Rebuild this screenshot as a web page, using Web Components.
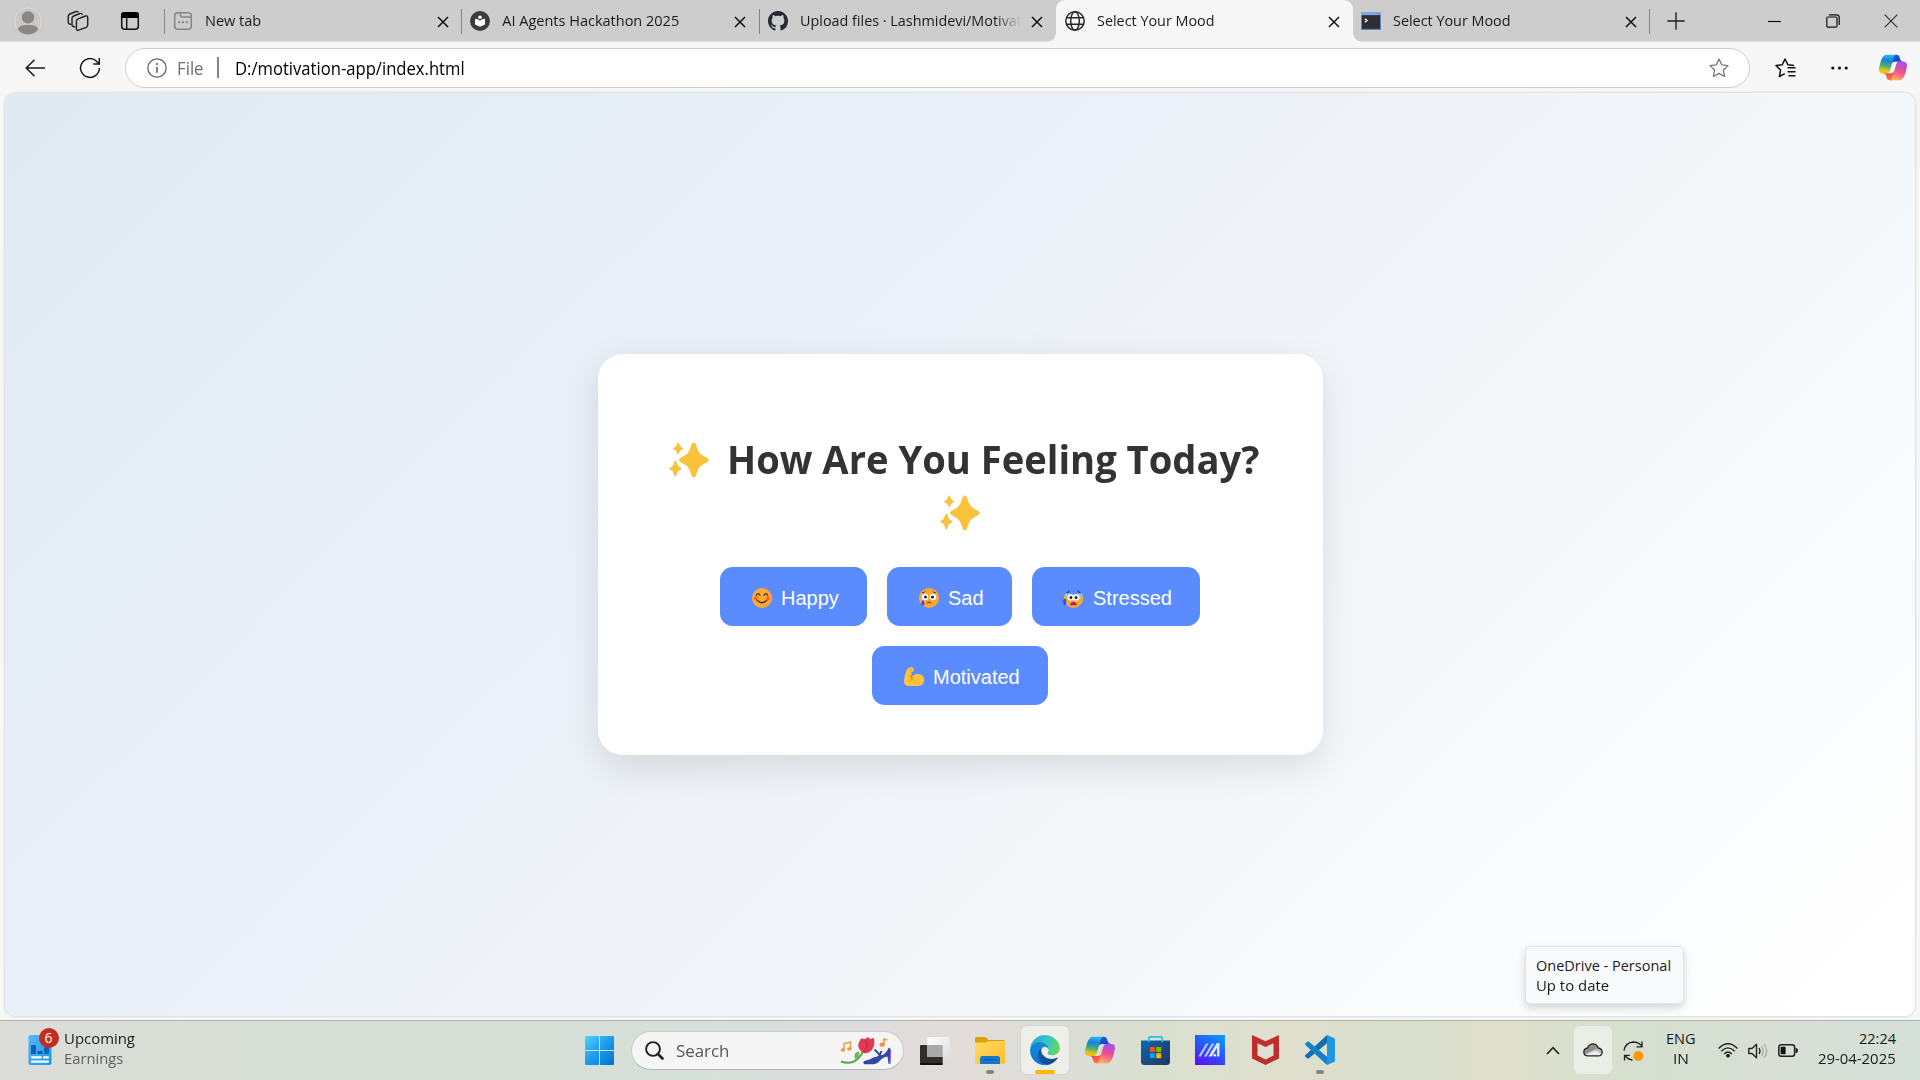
<!DOCTYPE html>
<html lang="en">
<head>
<meta charset="utf-8">
<title>Select Your Mood</title>
<style>
html,body{margin:0;height:100%;overflow:hidden;background:#f7f7f7;font-family:"Open Sans","Noto Sans",sans-serif;color:#1b1b1b}
</style>
</head>
<body>
<desktop-screen></desktop-screen>
<script>
const ICONS = {
avatar:['0 0 28 28','<circle cx="14" cy="14" r="13.2" fill="#cac8c5" stroke="#dedcd9" stroke-width="1"/><circle cx="14" cy="10.4" r="6.2" fill="#8a8886"/><path d="M3.7 22.5C5 18.500 9 17.900 14 17.900s9 .6 10.300 4.600A13.200 13.200 0 0 1 3.700 22.500z" fill="#8a8886"/>'],
spaces:['0 0 22 22','<g fill="#cdcdcd" stroke="#222" stroke-width="1.400" stroke-linejoin="round"><path d="M4.500 14.600 2.600 14Q1.200 13.500 1.200 12V6.500Q1.200 4.800 2.900 4L9 1.500Q10.500 1 11.500 2.400"/><path d="M8.200 17.200 6.300 16.500Q5 16 5 14.500V8.500Q5 6.800 6.700 6L13 3.500Q14.600 3 15.700 4.600"/><path d="M9.400 11.200Q9.400 9.500 11 8.800L18.500 6Q20.700 5.400 20.700 7.500V15Q20.700 16.600 19.200 17.300L11.600 20.200Q9.400 20.800 9.400 18.700z"/></g>'],
vtabs:['0 0 20 20','<rect x="1.700" y="1.700" width="16.600" height="16.600" rx="3" fill="none" stroke="#111" stroke-width="1.500"/><path d="M1 7V4Q1 1 4 1H16Q19 1 19 4V7z" fill="#000"/><path d="M6.700 6V18" stroke="#111" stroke-width="1.400"/>'],
newtab:['0 0 20 20','<g fill="none" stroke="#858585" stroke-width="1.500"><rect x="1.700" y="1.700" width="16.600" height="16.600" rx="3"/><path d="M7.500 2V4.500Q7.500 6 9 6H18"/></g><g fill="#858585"><rect x="5.200" y="10.200" width="2" height="2"/><rect x="9" y="10.200" width="2" height="2"/><rect x="12.800" y="10.200" width="2" height="2"/></g>'],
agents:['0 0 20 20','<circle cx="10" cy="10" r="10" fill="#3b3b3d"/><circle cx="10" cy="6.200" r="1.800" fill="#fff"/><path d="M5 7.800 8.500 8.600 10 9.800 11.500 8.600 15 7.800V13.500L10 15.800 5 13.500z" fill="#fff"/>'],
github:['0 0 16 16','<path fill="#24292f" d="M8 0C3.580 0 0 3.580 0 8c0 3.540 2.290 6.530 5.470 7.590.4.070.55-.17.55-.38 0-.19-.01-.82-.01-1.490-2.010.37-2.530-.49-2.690-.94-.09-.23-.48-.94-.82-1.130-.28-.15-.68-.52-.01-.53.63-.01 1.080.58 1.230.82.72 1.210 1.870.87 2.330.66.07-.52.28-.87.51-1.070-1.780-.2-3.640-.89-3.640-3.950 0-.87.31-1.590.82-2.150-.08-.2-.36-1.020.08-2.120 0 0 .67-.21 2.200.82.64-.18 1.320-.27 2-.27s1.360.09 2 .27c1.530-1.040 2.200-.82 2.200-.82.44 1.100.16 1.920.08 2.120.51.56.82 1.270.82 2.150 0 3.070-1.870 3.750-3.650 3.950.29.25.54.73.54 1.480 0 1.070-.01 1.930-.01 2.200 0 .21.15.46.55.38A8.010 8.010 0 0 0 16 8c0-4.420-3.580-8-8-8z"/>'],
globe:['0 0 20 20','<g fill="none" stroke="#262626" stroke-width="1.500"><circle cx="10" cy="10" r="9.200"/><ellipse cx="10" cy="10" rx="4.300" ry="9.200"/><path d="M1.700 6.700H18.300M1.700 13.300H18.300"/></g>'],
term:['0 0 20 18','<rect width="20" height="18" rx=".8" fill="#5b86c4"/><rect x="1" y="3.200" width="18" height="13.600" fill="#2f2f31"/><rect width="20" height="3" fill="#7aa9e6"/><rect x="16" y=".8" width="2.300" height="1.600" fill="#d66"/><path d="M3.800 6.800 6 8.500 3.800 10.200" fill="none" stroke="#fff" stroke-width="1.300"/>'],
x:['0 0 12 12','<path d="M1 1 11 11M11 1 1 11" stroke="#111" stroke-width="1.500" fill="none"/>'],
xthin:['0 0 14 14','<path d="M.7.700 13.300 13.300M13.300.700.7 13.300" stroke="#333" stroke-width="1.200"/>'],
plus:['0 0 18 18','<path d="M9 .3V17.700M.3 9H17.700" stroke="#222" stroke-width="1.400"/>'],
min:['0 0 13 13','<path d="M0 6.500H13" stroke="#111" stroke-width="1.200"/>'],
restore:['0 0 14 14','<g fill="none" stroke="#111" stroke-width="1.200"><rect x=".8" y="3" width="10.200" height="10.200" rx="1.200"/><path d="M3 .8H10.500Q13.200.8 13.200 3.500V11"/></g>'],
back:['0 0 20 18','<path d="M20 9H1.500M9.500.700 1.200 9l8.300 8.300" fill="none" stroke="#1a1a1a" stroke-width="1.500"/>'],
reload:['0 0 22 22','<path d="M20.400 11A9.400 9.400 0 1 1 17.300 4L20 6.700M20.300 1V7H14.300" fill="none" stroke="#1a1a1a" stroke-width="1.500"/>'],
info:['0 0 20 20','<circle cx="10" cy="10" r="9.200" fill="none" stroke="#666" stroke-width="1.300"/><path d="M10 9V14.700" stroke="#555" stroke-width="1.500"/><circle cx="10" cy="6" r="1" fill="#555"/>'],
star:['0 0 20 20','<path d="M10 1 12.700 6.800 19 7.600 14.400 12 15.600 18.500 10 15.400 4.400 18.500 5.600 12 1 7.600 7.300 6.800z" fill="none" stroke="#767676" stroke-width="1.300" stroke-linejoin="round"/>'],
favs:['0 0 21 20','<path d="M19 7.600 13 6.800 10 1 7.300 6.800 1 7.600 5.600 12 4.400 18.500 9.800 15.600" fill="none" stroke="#111" stroke-width="1.500" stroke-linejoin="round"/><path d="M12.500 9.700H20.500M12.500 13.700H20.500M13.500 17.700H20.500" stroke="#111" stroke-width="1.600"/>'],
dots:['0 0 17 4','<g fill="#111"><circle cx="1.800" cy="2" r="1.600"/><circle cx="8.500" cy="2" r="1.600"/><circle cx="15.200" cy="2" r="1.600"/></g>'],
copilot:['2 3 44 42','<defs><linearGradient id="a" x1="0" y1="0" x2="1" y2="1"><stop offset="0" stop-color="#2764e7"/><stop offset="1" stop-color="#0c2db8"/></linearGradient><linearGradient id="b" x1=".6" y1="1" x2=".3" y2="0"><stop offset="0" stop-color="#ff7a3d"/><stop offset="1" stop-color="#e8304f"/></linearGradient><linearGradient id="c" x1=".5" y1="0" x2=".35" y2="1"><stop offset="0" stop-color="#2bb8f7"/><stop offset=".3" stop-color="#1684dc"/><stop offset=".6" stop-color="#40ad7e"/><stop offset=".85" stop-color="#dfc516"/><stop offset="1" stop-color="#ffbd00"/></linearGradient><linearGradient id="d" x1=".7" y1="0" x2=".35" y2="1"><stop offset="0" stop-color="#a44ff0"/><stop offset=".5" stop-color="#ee4f91"/><stop offset="1" stop-color="#ffb266"/></linearGradient></defs><path fill="url(#a)" d="M34.142 7.325A4.630 4.630 0 0 0 29.700 4h-1.350a4.630 4.630 0 0 0-4.554 3.794L21.480 20.407l.575-1.965a4.630 4.630 0 0 1 4.444-3.330h7.853l3.294 1.282 3.175-1.283h-.926a4.630 4.630 0 0 1-4.443-3.325z"/><path fill="url(#b)" d="M14.330 40.656A4.630 4.630 0 0 0 18.779 44h2.870a4.630 4.630 0 0 0 4.629-4.510l.312-12.163-.654 2.233a4.630 4.630 0 0 1-4.443 3.329h-7.919l-2.823-1.531-3.057 1.531h.912a4.630 4.630 0 0 1 4.447 3.344z"/><path fill="url(#c)" d="M29.500 4H13.460c-4.583 0-7.332 6.057-9.165 12.113-2.172 7.177-5.014 16.775 3.208 16.775h6.926a4.630 4.630 0 0 0 4.453-3.358 2077 2077 0 0 1 4.971-17.156c.843-2.843 1.544-5.284 2.621-6.805C27.080 4.717 28.086 4 29.500 4"/><path fill="url(#d)" d="M18.498 44h16.040c4.582 0 7.332-6.058 9.165-12.115 2.171-7.177 5.013-16.775-3.208-16.775h-6.926a4.630 4.630 0 0 0-4.454 3.358 2084 2084 0 0 1-4.972 17.160c-.842 2.842-1.543 5.283-2.620 6.805-.604.852-1.610 1.567-3.025 1.567"/>'],
sparkles:['0 0 40 36','<g fill="#f8c23c"><path d="M24.800.5Q26.300.5 27 2.600C29.600 10.600 30.500 12 37.500 15.600Q39.800 16.800 39.800 18T37.500 20.400C30.500 24 29.600 25.400 27 33.400Q26.300 35.500 24.800 35.500T22.600 33.400C20 25.400 19.100 24 12.100 20.400Q10 19.200 10 18T12.100 15.600C19.100 12 20 10.600 22.600 2.600Q23.300.5 24.800.5z"/><path d="M9.200.500Q9.900.500 10.200 1.800C11 4.300 11.600 4.900 14 5.900Q14.800 6.400 14 6.900C11.600 7.900 11 8.500 10.200 11Q9.900 12.200 9.200 12.200T8.200 11C7.400 8.500 6.800 7.900 4.400 6.900Q3.600 6.400 4.400 5.900C6.800 4.900 7.400 4.300 8.200 1.800Q8.500.500 9.200.500z"/><path d="M6.300 18.500Q7.100 18.500 7.500 20C8.500 23.500 9.300 24.800 12.200 26Q13.300 26.600 12.200 27.200C9.300 28.400 8.500 29.500 7.500 33Q7.100 34.500 6.300 34.500T5.200 33C4.200 29.500 3.400 28.400.7 27.200Q-.3 26.600.7 26C3.400 24.800 4.200 23.500 5.200 20Q5.500 18.500 6.300 18.500z"/></g>'],
happy:['0 0 20 20','<circle cx="10" cy="10" r="10" fill="#fca92f"/><g fill="#fb5f3a"><circle cx="4" cy="10.300" r="2"/><circle cx="16" cy="10.300" r="2"/></g><g fill="none" stroke="#402a32" stroke-width="1.300" stroke-linecap="round"><path d="M4.300 7.300Q6.200 3.800 8 7.300M12 7.300Q13.800 3.800 15.700 7.300M5.300 12.400Q10 17 14.700 12.400"/></g>'],
sad:['0 0 20 20','<circle cx="10" cy="10" r="10" fill="#fca92f"/><g fill="#fff"><circle cx="6" cy="9" r="3.200"/><circle cx="14" cy="9" r="3.200"/></g><g fill="#35232c"><circle cx="6.500" cy="9" r="1.600"/><circle cx="13.500" cy="9" r="1.600"/></g><path d="M7.700 15.300Q10 12.700 12.300 15.300M3 5Q5.500 4.700 6.500 3M17 5Q14.500 4.700 13.500 3" fill="none" stroke="#5a3428" stroke-width="1"/><path d="M3.800 11.800Q5.700 14 5.500 16 5.200 17.600 3.800 17.600T2.200 16Q2.200 14 3.800 11.800z" fill="#3a4bef"/>'],
stressed:['0 0 22 20','<path d="M2 6.500H20Q21 8 21 10A10 10 0 0 1 1 10Q1 8 2 6.500z" fill="#fca92f"/><path d="M3 4.500Q7 6.500 11 6.500T19 4.500L20.500 8 17 10H5L1.500 8z" fill="#8cc3f7"/><g fill="#fff"><circle cx="8" cy="9.500" r="3.200"/><circle cx="14" cy="9.500" r="3.200"/></g><g fill="#2b1c27"><circle cx="8.300" cy="9.600" r="1.500"/><circle cx="13.700" cy="9.600" r="1.500"/></g><path d="M7.500 17.300Q8 14 11 14T14.500 17.300z" fill="#b51378"/><path d="M3.500 5Q6 4.500 6.500 2.500M18.500 5Q16 4.500 15.500 2.500" stroke="#24407e" stroke-width="1.100" fill="none"/><path d="M.3 12.500Q.3 10.800 1.800 10.800T3.400 12.500V15.500Q3.300 17 1.800 17T.3 15.500z" fill="#3a4bef"/>'],
muscle:['0 0 20 19','<path d="M3 2.500Q4.500-.2 7.500.2 10.300 1 9.900 3.200 9.700 5 7.400 5L7 10.500Q9.500 7 14 7 20 7.500 20 13.200 19.500 18.700 14 19H4Q0 18.700 0 14 .3 7.500 3 2.500z" fill="#fec53b"/><path d="M5.800 3.500Q7.200 1.900 7.900 3.200M5 14.700Q7.800 13.300 8.200 9.500Q8.500 12.500 11 14.500M8 11Q6.500 10.500 4.500 8" fill="none" stroke="#dd8c17" stroke-width=".9"/>'],
widget:['0 0 24 30','<defs><linearGradient id="a" x1="0" y1="0" x2="1" y2="1"><stop offset="0" stop-color="#58b8f8"/><stop offset="1" stop-color="#1797e8"/></linearGradient></defs><rect x=".5" width="23" height="30" rx="2.200" fill="url(#a)"/><g fill="#0e5fb6"><rect x="3" y="10" width="5" height="9" rx="1"/><rect x="9.500" y="16" width="5" height="3" rx=".8"/><rect x="16" y="12" width="5" height="7" rx="1"/></g><g fill="#fff"><rect x="3" y="21.200" width="10.800" height="2.300" rx="1"/><rect x="15" y="21.200" width="6" height="2.300" rx="1"/><rect x="3" y="25.400" width="18" height="2.300" rx="1"/></g>'],
start:['0 0 29 29','<defs><linearGradient id="a" gradientUnits="userSpaceOnUse" x1="0" y1="0" x2="29" y2="29"><stop offset="0" stop-color="#52d1ff"/><stop offset=".5" stop-color="#1d9bea"/><stop offset="1" stop-color="#0072d2"/></linearGradient></defs><path fill="url(#a)" d="M1 0H14V14H0V1Q0 0 1 0zM15 0H28Q29 0 29 1V14H15zM0 15H14V29H1Q0 29 0 28zM15 15H29V28Q29 29 28 29H15z"/>'],
search:['0 0 19 19','<circle cx="8" cy="8" r="6.900" fill="none" stroke="#1c1c1c" stroke-width="1.900"/><path d="M12.800 12.800 17.500 17.500" stroke="#1c1c1c" stroke-width="2.600" stroke-linecap="round"/>'],
art:['0 0 52 28','<g fill="none" stroke="#f19a42" stroke-width="1.500"><path d="M4 12.500V6.500L10.500 5V11.500"/><path d="M44 7V1.300Q45 3.300 47.300 2.500"/></g><g fill="#f59139"><ellipse cx="2.900" cy="13" rx="2.200" ry="1.800"/><ellipse cx="9.300" cy="12" rx="2.200" ry="1.800"/><ellipse cx="42.200" cy="7.600" rx="2.700" ry="2.200"/></g><path d="M1 24.500Q11 28 17.500 22 21 18.500 23 14.500" fill="none" stroke="#54a644" stroke-width="2"/><path d="M15 22Q13 15.500 19 14.300 20 20 15 22z" fill="#65b94b"/><path d="M21 1.500 25 2 28 0 30 2 34 1Q35.500 9 31.500 13.500 27.500 17.500 22.500 15.500 16.500 11 19 5z" fill="#e33a50"/><path d="M25.500 3Q29 9 24 15.500" fill="none" stroke="#b5203c" stroke-width="1"/><path d="M42 18.500Q46.500 16 48.500 11 50.500 10.300 50.800 13.500L50.500 26.800H48.500L47.500 19.500Q43 20 40 23.500 37 27.300 33 27.300H24.500Q22.300 26 24.300 24 30 22.500 33.500 20.500z" fill="#3347a8"/><path d="M34.500 12.500 42.500 20.500M34 21Q38 23.500 41.500 14" fill="none" stroke="#3347a8" stroke-width="2"/><path d="M50.800 13 49.600 26.500" stroke="#a55bd7" stroke-width="1"/>'],
taskview:['0 0 30 28','<defs><linearGradient id="a" x1="0" y1="0" x2="1" y2="1"><stop offset="0" stop-color="#fff"/><stop offset="1" stop-color="#dedfe1"/></linearGradient></defs><rect x="0" y="8" width="22.700" height="20" rx="1" fill="#2e2e2e"/><rect x="0" y="26" width="22.700" height="2" rx="1" fill="#111"/><rect x="7.300" y="0" width="22.300" height="20" rx="1" fill="url(#a)"/><rect x="7.300" y="8" width="15.400" height="12" fill="#a9a9a9"/>'],
folder:['0 0 30 27','<defs><linearGradient id="a" x1="0" y1="0" x2="1" y2="1"><stop offset="0" stop-color="#ffdc62"/><stop offset="1" stop-color="#fdbd2c"/></linearGradient></defs><path d="M0 1.500Q0 0 1.500 0H9.500Q10.500 0 11.200.7L13.500 3H28.500Q30 3 30 4.500V10H0z" fill="#dda006"/><path d="M0 5.500H10.500L13 4H30V26.800H0z" fill="url(#a)"/><path d="M5 27V21.500Q5 19 7.500 19H22.500Q25 19 25 21.500V27z" fill="#1377cc"/><path d="M8.500 22.700H21.500" stroke="#0a579f" stroke-width="1"/>'],
edge:['4 0 258 259','<defs><linearGradient id="a" x1="0" y1=".5" x2="1" y2=".7"><stop offset="0" stop-color="#0c59a4"/><stop offset="1" stop-color="#114a8b"/></linearGradient><linearGradient id="b" x1=".7" y1="0" x2=".3" y2="1"><stop offset="0" stop-color="#1b8cd3"/><stop offset="1" stop-color="#0877d9"/></linearGradient><linearGradient id="c" x1="0" y1=".4" x2="1" y2=".6"><stop offset="0" stop-color="#24a9dc"/><stop offset=".5" stop-color="#34c5cc"/><stop offset="1" stop-color="#68d957"/></linearGradient></defs><path fill="url(#a)" d="M235.680 195.460a93.730 93.730 0 0 1-10.540 4.710 101.870 101.870 0 0 1-35.900 6.460c-47.320 0-88.540-32.550-88.540-74.320A31.480 31.480 0 0 1 117.130 105c-42.800 1.800-53.800 46.400-53.800 72.530 0 73.880 68.090 81.370 82.760 81.370 7.910 0 19.840-2.300 27-4.560l1.310-.44a128.340 128.340 0 0 0 66.600-52.800 4 4 0 0 0-5.320-5.640z"/><path fill="url(#b)" d="M110.340 246.340A79.200 79.200 0 0 1 87.600 225a80.720 80.720 0 0 1 29.530-120c3.120-1.470 8.450-4.130 15.540-4a32.350 32.350 0 0 1 25.690 13 31.880 31.880 0 0 1 6.360 18.660c0-.21 24.460-79.600-80-79.600-43.900 0-80 41.660-80 78.210a130.150 130.150 0 0 0 12.110 56 128 128 0 0 0 156.380 67.110 75.550 75.550 0 0 1-62.780-8z"/><path fill="url(#c)" d="M156.940 153.780c-.81 1.050-3.300 2.500-3.300 5.660 0 2.610 1.700 5.120 4.720 7.230 14.380 10 41.490 8.680 41.560 8.680a59.560 59.560 0 0 0 30.270-8.350 61.380 61.380 0 0 0 30.430-52.880c.26-22.410-8-37.310-11.340-43.910C228.090 28.760 182.350 0 132.610 0a128 128 0 0 0-128 126.200c.48-36.540 36.800-66.050 80-66.050 3.500 0 23.460.34 42 10.070 16.340 8.580 24.900 18.940 30.850 29.210 6.180 10.670 7.280 24.150 7.280 29.520s-2.740 13.330-7.800 24.830z"/>'],
store:['0 0 29 29','<defs><linearGradient id="a" x1="0" y1="0" x2="1" y2="1"><stop offset="0" stop-color="#0a67b2"/><stop offset="1" stop-color="#27345c"/></linearGradient></defs><path d="M0 4.500H29V25.500Q29 29 25.500 29H3.500Q0 29 0 25.500z" fill="url(#a)"/><path d="M7.700 6V2.500Q7.700.9 9.300.9H19.700Q21.300.9 21.300 2.500V6" fill="none" stroke="#29bdf0" stroke-width="1.800"/><path d="M9 11H14V16H9z" fill="#f25022"/><path d="M15.200 11H20.200V16H15.200z" fill="#7fba00"/><path d="M9 17.200H14V22.200H9z" fill="#00a4ef"/><path d="M15.200 17.200H20.200V22.200H15.200z" fill="#ffb900"/>'],
asus:['0 0 30 30','<defs><linearGradient id="a" x1=".8" y1="0" x2=".2" y2="1"><stop offset="0" stop-color="#0c96fd"/><stop offset=".5" stop-color="#2a53fa"/><stop offset="1" stop-color="#5a12f6"/></linearGradient></defs><rect width="30" height="30" fill="url(#a)"/><path d="M3.300 21.500 11 8.500H13.500L5.800 21.500zM9 21.500 16.800 8.500H19.300L11.500 21.500z" fill="#b5c8ff"/><path d="M13.500 21.500 21.800 8H24.500V21.500H22V12.800L16.800 21.500z" fill="#dfe7ff"/><circle cx="19.800" cy="20.300" r="1.300" fill="#fff"/>'],
mcafee:['0 0 27 30','<path d="M0 0 13.500 6.200 27 0V23.500L13.500 30 0 23.500z" fill="#bf2d2c"/><path d="M5.500 8.200 13.500 12 21.500 8.200V20.500L13.500 24.500 5.500 20.500z" fill="#dfe0d1"/>'],
vscode:['0 0 30 30','<path d="M22 0 29 2.900Q30 3.400 30 4.600V25.400Q30 26.600 29 27.100L22 30z" fill="#2196e3"/><path d="M22 0V8.300L4 23.200Q3 23.900 2.200 23.200L.4 21.600Q-.3 20.800.4 20z" fill="#0e6fb5"/><path d="M22 30V21.700L4 6.800Q3 6.100 2.200 6.800L.4 8.400Q-.3 9.200.4 10z" fill="#1180cb"/>'],
up:['0 0 14 9','<path d="M1 8 7 1.700 13 8" fill="none" stroke="#222" stroke-width="1.700"/>'],
cloud:['0 0 20 14','<path d="M5 12.900Q1 12.900.8 9 1 5.400 4.600 5 6 .8 10.200.8 14 1 15.200 5 19 5.500 19.200 9.200 18.800 12.900 15.500 12.900z" fill="#8f8f8f"/><path d="M5 12.900Q2.500 12.800 1.700 11L13 6 15.200 5Q19 5.500 19.200 9.200 18.800 12.900 15.500 12.900z" fill="#bdbdbd"/><path d="M5 12.900Q3.500 12.900 2.500 12L12.500 7.500 18.700 11Q17.500 12.900 15.500 12.900z" fill="#ececec"/><path d="M5 12.900Q1 12.900.8 9 1 5.400 4.600 5 6 .8 10.200.8 14 1 15.200 5 19 5.500 19.200 9.200 18.800 12.900 15.500 12.900z" fill="none" stroke="#242424" stroke-width="1.300"/>'],
sync:['0 0 21 20','<path d="M1 9.700Q2 2 10 1 16 1 19 5.500M19 .5V5.800H13.500M9.500 19Q5 18.700 2 14.500M7 14.300H1.500V19.500" fill="none" stroke="#222" stroke-width="1.300"/><circle cx="15.300" cy="15" r="5.100" fill="#fb9604"/>'],
wifi:['0 0 20 15','<g fill="none" stroke="#222" stroke-width="1.400"><path d="M.6 5.500Q10-3.800 19.400 5.500M3.300 8.300Q10 1.500 16.700 8.300M6.100 11Q10 7 13.900 11"/></g><circle cx="10" cy="12.700" r="1.900" fill="#222"/>'],
vol:['0 0 20 16','<path d="M.8 5.500V10.500H4L8.500 14.700V1.300L4 5.500z" fill="none" stroke="#222" stroke-width="1.400" stroke-linejoin="round"/><path d="M11 5Q13 8 11 11" fill="none" stroke="#222" stroke-width="1.300"/><path d="M13.500 3Q17 8 13.500 13M16 1Q21.500 8 16 15" fill="none" stroke="#a4a9a2" stroke-width="1.200"/>'],
batt:['0 0 20 13','<rect x=".8" y=".8" width="15.800" height="11.400" rx="2.500" fill="none" stroke="#222" stroke-width="1.500"/><rect x="2.600" y="2.700" width="5" height="7.600" rx=".8" fill="#111"/><path d="M17.500 4H18.500Q20 4.500 20 6.500T18.500 9H17.500z" fill="#222"/>']
};
const define = (name, html) => customElements.define(name, class extends HTMLElement {
  constructor(){ super(); this.attachShadow({mode:'open'}).innerHTML = html; }
});

define('desktop-screen', `<style>:host{display:flex;flex-direction:column;width:1920px;height:1080px;overflow:hidden;background:#f7f7f7}
browser-page{flex:1}
tray-tip{position:absolute;left:1525px;top:946px}</style>
<tab-strip></tab-strip><nav-bar></nav-bar><browser-page><mood-card></mood-card></browser-page><task-bar></task-bar>
<tray-tip></tray-tip>`);

define('tab-strip', `<style>:host{display:flex;height:42px;background:#cdcdcd;flex:none;box-shadow:inset 0 -1px #dcdcdc}
.l{display:flex;align-items:center;width:164px;box-sizing:border-box;padding-left:14px}
.l>:nth-child(2){margin-left:24.500px}.l>:nth-child(3){margin-left:31px}
.r{display:flex;align-items:center;flex:1;background:linear-gradient(#858585,#858585) 0 9px/1px 25px no-repeat;padding-left:18px;margin-left:-1.500px}
.sys{display:flex;align-items:center;margin-left:auto;gap:44.500px;padding-right:22px}</style>
<div class="l"><ui-icon name="avatar" w="28" h="28"></ui-icon><ui-icon name="spaces" w="22" h="22"></ui-icon><ui-icon name="vtabs" w="20" h="20"></ui-icon></div>
<browser-tab><ui-icon slot="icon" name="newtab" w="20" h="20"></ui-icon><fit-text w="56">New tab</fit-text></browser-tab>
<browser-tab><ui-icon slot="icon" name="agents" w="20" h="20"></ui-icon><fit-text w="177">AI Agents Hackathon 2025</fit-text></browser-tab>
<browser-tab><ui-icon slot="icon" name="github" w="20" h="20"></ui-icon><fit-text w="226">Upload files · Lashmidevi/Motivati</fit-text></browser-tab>
<browser-tab class="on"><ui-icon slot="icon" name="globe" w="20" h="20"></ui-icon><fit-text w="118">Select Your Mood</fit-text></browser-tab>
<browser-tab class="plain"><ui-icon slot="icon" name="term" w="20" h="18"></ui-icon><fit-text w="118">Select Your Mood</fit-text></browser-tab>
<div class="r"><ui-icon name="plus" w="18" h="18"></ui-icon><div class="sys"><ui-icon name="min" w="13" h="13"></ui-icon><ui-icon name="restore" w="14" h="14"></ui-icon><ui-icon name="xthin" w="14" h="14"></ui-icon></div></div>`);

define('browser-tab', `<style>:host{display:flex;align-items:center;width:297.300px;height:42px;box-sizing:border-box;padding-left:9px;font-size:14.500px;line-height:20px;background:linear-gradient(#858585,#858585) 0 9px/1px 25px no-repeat;flex:none;position:relative}
:host(.plain){background:none;padding-left:7.500px}
:host(.on){background:#f7f7f7;border-radius:9px 9px 0 0;height:42px}
:host(.on)::before,:host(.on)::after{content:"";position:absolute;bottom:0;width:9px;height:9px;background:radial-gradient(circle at 0 0,transparent 8.500px,#f7f7f7 9px)}
:host(.on)::before{left:-9px}:host(.on)::after{right:-9px;transform:scaleX(-1)}
.t{margin-left:12px;width:223px;overflow:hidden;white-space:nowrap;-webkit-mask:linear-gradient(90deg,#000 195px,transparent 221px);padding-bottom:1px}
:host(.plain) .t{margin-left:12.500px}
.x{margin-left:8.500px;margin-top:1px}</style><slot name="icon"></slot><div class="t"><slot></slot></div><ui-icon class="x" name="x" w="12" h="12"></ui-icon>`);

define('nav-bar', `<style>:host{display:flex;align-items:center;height:50.500px;background:#f7f7f7;flex:none;padding:1px 0 0 24.500px;font-size:18px;box-sizing:border-box}
.re{margin-left:34px}
.a{display:flex;align-items:center;box-sizing:border-box;width:1625px;height:40px;margin-left:24.500px;border:1.500px solid #cfcfcf;border-radius:20px;background:#fff;padding:0 20.500px 0 21px;line-height:38px}
.f{margin-left:10px;color:#6e6e6e}.s{width:1.500px;height:21px;background:#858585;margin-left:13px}.u{margin-left:16px;color:#000}.a ui-icon:last-child{margin-left:auto}
.fav{margin-left:24.500px}.d{margin-left:35.500px}.c{margin-left:30.500px}</style>
<ui-icon name="back" w="20" h="18"></ui-icon><ui-icon class="re" name="reload" w="22" h="22"></ui-icon>
<div class="a"><ui-icon name="info" w="20" h="20"></ui-icon><fit-text class="f" w="27">File</fit-text><span class="s"></span><fit-text class="u" w="230">D:/motivation-app/index.html</fit-text><ui-icon name="star" w="20" h="20"></ui-icon></div>
<ui-icon class="fav" name="favs" w="21" h="20"></ui-icon><ui-icon class="d" name="dots" w="17" h="4"></ui-icon><ui-icon class="c" name="copilot" w="28" h="27"></ui-icon>`);

define('browser-page', `<style>:host{display:flex;padding:0 5px 4px;min-height:0}
.p{flex:1;display:flex;align-items:center;justify-content:center;border-radius:11px;background:linear-gradient(135deg,#dfeaf2 0%,#e7eef6 25%,#ecf1f9 41%,#eff3f7 50%,#f5f8fb 70%,#fff 97%);box-shadow:0 0 2px 1px #dcdcdc}</style><div class="p"><slot></slot></div>`);

define('mood-card', `<style>:host{display:flex;flex-direction:column;box-sizing:border-box;width:725px;height:401px;border-radius:25px;background:#fff;box-shadow:0 12.500px 37.500px rgba(0,0,0,.11);padding:79px 50px 0;align-items:center}
h1{margin:0;display:flex;flex-direction:column;align-items:center;font-size:39.500px;line-height:53px;color:#333;font-weight:700}
h1 div{display:flex;align-items:center;height:53px;padding-left:7px}h1 fit-text{margin-left:18px}h1 ui-icon{margin-top:2px}
h1 div:last-child{padding:0}
.b{display:flex;flex-wrap:wrap;justify-content:center;gap:20px;margin-top:28px}</style>
<h1><div><ui-icon name="sparkles" w="40" h="36"></ui-icon><fit-text w="532">How Are You Feeling Today?</fit-text></div><div><ui-icon name="sparkles" w="40" h="36"></ui-icon></div></h1>
<div class="b"><mood-button style="width:147px"><ui-icon slot="e" name="happy" w="20" h="20"></ui-icon>Happy</mood-button><mood-button style="width:125px"><ui-icon slot="e" name="sad" w="20" h="20"></ui-icon>Sad</mood-button><mood-button style="width:168px;--pad:31px"><ui-icon slot="e" name="stressed" w="21" h="20"></ui-icon>Stressed</mood-button><mood-button style="width:176px"><ui-icon slot="e" name="muscle" w="20" h="19"></ui-icon>Motivated</mood-button></div>`);

define('mood-button', `<style>:host{display:block}button{display:flex;align-items:center;width:100%;height:59px;border:0;border-radius:12.500px;background:#5b8cff;color:#fff;font:20px/24px "Liberation Sans",Arial,sans-serif;padding:3px 0 0 var(--pad,32px);gap:9px}
::slotted(ui-icon){flex:none}</style><button><slot name="e"></slot><span><slot></slot></span></button>`);

define('tray-tip', `<style>:host{display:block;box-sizing:border-box;width:159px;height:58px;padding:8.500px 0 0 10px;border-radius:5px;background:#f9fafc;border:1px solid #e3e3e5;box-shadow:0 4px 8px rgba(0,0,0,.16);font-size:14.500px;line-height:20px}</style><fit-text w="135">OneDrive - Personal</fit-text><br><fit-text w="73">Up to date</fit-text>`);

define('task-bar', `<style>:host{display:flex;align-items:center;height:60px;flex:none;box-sizing:border-box;border-top:1px solid #adb0ab;font-size:14.500px;line-height:20px;background:linear-gradient(90deg,#dcdcd8 0,#d9dfd6 220px,#d5dfd5 480px,#d6e0da 700px,#dcdcdd 850px,#e2ddda 970px,#dcddd7 1060px,#d9e0cf 1150px,#e0dfce 1285px,#d9dfcd 1400px,#dfdfcd 1500px,#d5dfd0 1660px,#d9dfd5 1760px,#d5e0d9 1920px)}
.w{display:flex;width:584.500px;padding-left:28px;box-sizing:border-box;align-items:center}
.wi{position:relative;display:flex;top:-1px}.bd{position:absolute;left:10.500px;top:-6.500px;width:20px;height:20px;border-radius:50%;background:#c62b1d;color:#fff;font-size:14px;text-align:center;line-height:20px}
.tx{display:flex;flex-direction:column;margin-left:12px;padding-bottom:2.500px}.g{color:#5f625e}
.m{display:flex;align-items:center}
.se{display:flex;align-items:center;box-sizing:border-box;width:273px;height:39px;border-radius:20px;border:1px solid #c9ccc9;border-bottom-color:#b5b8b5;background:#f4f5f4;margin:0 16px 0 17.500px;padding:0 11px 0 13px;font-size:16.500px;color:#555}
.se fit-text{margin-left:12px}.se ui-icon:last-child{margin-left:auto}
task-app{margin-right:7px}
.tr{display:flex;align-items:center;margin-left:auto;padding-right:24px}
.tr>*{flex:none}.hl{display:flex;align-items:center;justify-content:center;width:38px;height:48px;border-radius:6px;background:#ebeee7;margin:0 11px 0 14px;position:relative;top:-1px}
.col{display:flex;flex-direction:column;align-items:center;padding-bottom:2.500px}.col.e{align-items:flex-end}</style>
<div class="w"><div class="wi"><ui-icon name="widget" w="24" h="30"></ui-icon><span class="bd">6</span></div><div class="tx"><fit-text w="71">Upcoming</fit-text><fit-text class="g" w="59">Earnings</fit-text></div></div>
<div class="m"><ui-icon name="start" w="29" h="29"></ui-icon><div class="se"><ui-icon name="search" w="19" h="19"></ui-icon><fit-text w="53">Search</fit-text><ui-icon name="art" w="52" h="28"></ui-icon></div><ui-icon style="margin-right:16px" name="taskview" w="30" h="28"></ui-icon>
<task-app class="run"><ui-icon name="folder" w="30" h="27"></ui-icon></task-app><task-app class="on"><ui-icon name="edge" w="30" h="30"></ui-icon></task-app><task-app><ui-icon name="copilot" w="30" h="28"></ui-icon></task-app><task-app><ui-icon name="store" w="29" h="29"></ui-icon></task-app><task-app><ui-icon name="asus" w="30" h="30"></ui-icon></task-app><task-app><ui-icon name="mcafee" w="27" h="30"></ui-icon></task-app><task-app class="run"><ui-icon name="vscode" w="30" h="30"></ui-icon></task-app></div>
<div class="tr"><ui-icon name="up" w="14" h="9"></ui-icon><div class="hl"><ui-icon name="cloud" w="20" h="14"></ui-icon></div><ui-icon name="sync" w="21" h="20"></ui-icon><div class="col" style="margin:0 22px 0 22px"><fit-text w="30">ENG</fit-text><fit-text w="16">IN</fit-text></div><ui-icon name="wifi" w="20" h="15"></ui-icon><ui-icon name="vol" w="20" h="16" style="margin:0 10px"></ui-icon><ui-icon name="batt" w="20" h="13"></ui-icon><div class="col e" style="margin-left:20px"><fit-text w="37">22:24</fit-text><fit-text w="78">29-04-2025</fit-text></div></div>`);

define('task-app', `<style>:host{display:flex;align-items:center;justify-content:center;width:48px;height:48px;border-radius:6px;position:relative;top:-.500px;flex:none}
:host(.on){background:#efefea;box-shadow:0 0 1px 1px #d5d6d0}
:host(.run)::after,:host(.on)::after{content:"";position:absolute;bottom:0;left:20px;width:8px;height:4px;border-radius:2px;background:#85877f}
:host(.on)::after{left:14px;width:20px;background:#ffb900}</style><slot></slot>`);

customElements.define('ui-icon', class extends HTMLElement {
  connectedCallback(){
    const [box, body] = ICONS[this.getAttribute('name')], w = this.getAttribute('w'), h = this.getAttribute('h');
    const root = this.shadowRoot || this.attachShadow({mode:'open'});
    root.innerHTML = `<style>:host{display:inline-flex;flex:none}svg{display:block;overflow:visible}</style><svg width="${w}" height="${h}" viewBox="${box}" preserveAspectRatio="none" aria-hidden="true">${body}</svg>`;
  }
});

/* Single-line label that is set to a given width whatever its font's own advance is. */
customElements.define('fit-text', class extends HTMLElement {
  connectedCallback(){
    const w = +this.getAttribute('w');
    const root = this.shadowRoot || this.attachShadow({mode:'open'});
    root.innerHTML = `<style>:host{display:inline-block;width:${w}px;white-space:nowrap;flex:none}span{display:inline-block;transform-origin:0 50%}</style><span><slot></slot></span>`;
    const s = root.querySelector('span');
    s.style.transform = `scaleX(${w / s.offsetWidth})`;
  }
});
</script>
</body>
</html>
